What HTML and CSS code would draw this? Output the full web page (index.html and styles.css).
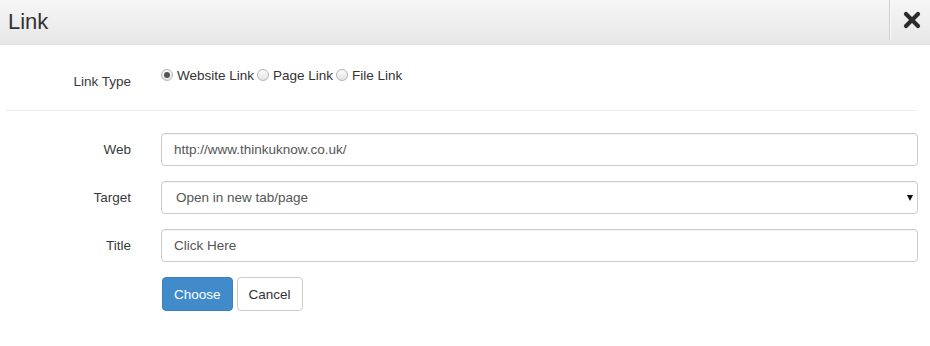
FILE: index.html
```html
<!DOCTYPE html>
<html lang="en">
<head>
    <meta charset="UTF-8">
    <title>Link</title>
    <link rel="stylesheet" href="styles.css">
</head>
<body>
    <div class="modal">
        <!-- Header -->
        <div class="modal-header">
            <h4 class="modal-title">Link</h4>
            <button class="close-btn" type="button" aria-label="Close">
                <svg width="20" height="20" viewBox="0 0 20 20">
                    <path d="M4 4 L16 16 M16 4 L4 16" stroke="#2b2b2b" stroke-width="4.2" stroke-linecap="round"/>
                </svg>
            </button>
        </div>

        <!-- Body -->
        <div class="modal-body">
            <div class="form-row type-row">
                <label class="control-label">Link Type</label>
                <div class="radios">
                    <label class="radio"><input type="radio" name="type" checked> Website Link</label>
                    <label class="radio"><input type="radio" name="type"> Page Link</label>
                    <label class="radio"><input type="radio" name="type"> File Link</label>
                </div>
            </div>

            <hr class="divider">

            <div class="form-row">
                <label class="control-label" for="web">Web</label>
                <input class="form-control" type="text" id="web" value="http://www.thinkuknow.co.uk/">
            </div>
            <div class="form-row">
                <label class="control-label" for="target">Target</label>
                <div class="select-wrap">
                    <select class="form-control select" id="target">
                        <option>Open in new tab/page</option>
                        <option>Open in same tab/page</option>
                    </select>
                </div>
            </div>
            <div class="form-row">
                <label class="control-label" for="title">Title</label>
                <input class="form-control" type="text" id="title" value="Click Here">
            </div>
            <div class="form-row">
                <span></span>
                <div class="actions">
                    <button class="btn btn-primary" type="button">Choose</button>
                    <button class="btn btn-default" type="button">Cancel</button>
                </div>
            </div>
        </div>
    </div>
</body>
</html>
```

FILE: styles.css
```css
/* Basic styling */
* { box-sizing: border-box; margin: 0; padding: 0; }
body { background-color: #ffffff; font-family: "Liberation Sans", Arial, sans-serif; font-size: 13.5px; color: #333333; width: 930px; height: 346px; overflow: hidden; }

/* Header */
.modal-header { display: flex; align-items: stretch; justify-content: space-between; height: 45px; background: linear-gradient(to bottom, #f6f6f6 0%, #e7e7e7 100%); border-bottom: 1px solid #e2e2e2; }
.modal-title { font-size: 22px; font-weight: normal; line-height: 44px; padding-left: 8px; color: #333; }
.close-btn { width: 41px; border: none; border-left: 1px solid #cfcfcf; box-shadow: inset 1px 0 0 #f8f8f8; background: transparent; display: flex; align-items: center; justify-content: center; padding-left: 3px; margin-bottom: 4px; cursor: pointer; }

/* Form rows */
.modal-body { padding: 20px 12px 0 0; }
.form-row { display: grid; grid-template-columns: 161px 1fr; margin-bottom: 15px; }
.control-label { text-align: right; padding-right: 30px; padding-top: 7px; line-height: 20px; color: #3a3a3a; }
.type-row { margin-bottom: 0; }

.radios { display: flex; gap: 3px; line-height: 20px; margin-top: -5px; }
.radio { display: flex; align-items: center; gap: 4px; }
.radio input { appearance: none; -webkit-appearance: none; width: 12px; height: 12px; border-radius: 50%; border: 1px solid #b5b5b5; background: linear-gradient(to bottom, #fbfbfb, #e4e4e4); margin-top: -2px; position: relative; }
.radio input:checked::after { content: ""; position: absolute; left: 2px; top: 2px; width: 6px; height: 6px; border-radius: 50%; background: #555555; }

.divider { border: none; border-top: 1px solid #eeeeee; margin: 18px 0 22px 5px; }

/* Inputs */
.form-control { width: 100%; height: 33px; padding: 0 12px; border: 1px solid #cccccc; border-radius: 4px; font-family: inherit; font-size: 13.5px; color: #555555; background: #fff; box-shadow: inset 0 1px 1px rgba(0, 0, 0, 0.06); }
.select-wrap { position: relative; }
.select { appearance: none; -webkit-appearance: none; padding-left: 14px; }
.select-wrap::after { content: ""; position: absolute; right: 5px; top: 14px; border-left: 3px solid transparent; border-right: 3px solid transparent; border-top: 6px solid #111; pointer-events: none; }

/* Buttons */
.actions { display: flex; gap: 4px; padding-left: 1px; }
.btn { height: 34px; padding: 0 11px; border-radius: 4px; font-family: inherit; font-size: 13.5px; border: 1px solid transparent; cursor: pointer; }
.btn-primary { background-color: #428bca; border-color: #3a80bd; color: #ffffff; }
.btn-default { background-color: #ffffff; border-color: #cccccc; color: #333333; }
```
